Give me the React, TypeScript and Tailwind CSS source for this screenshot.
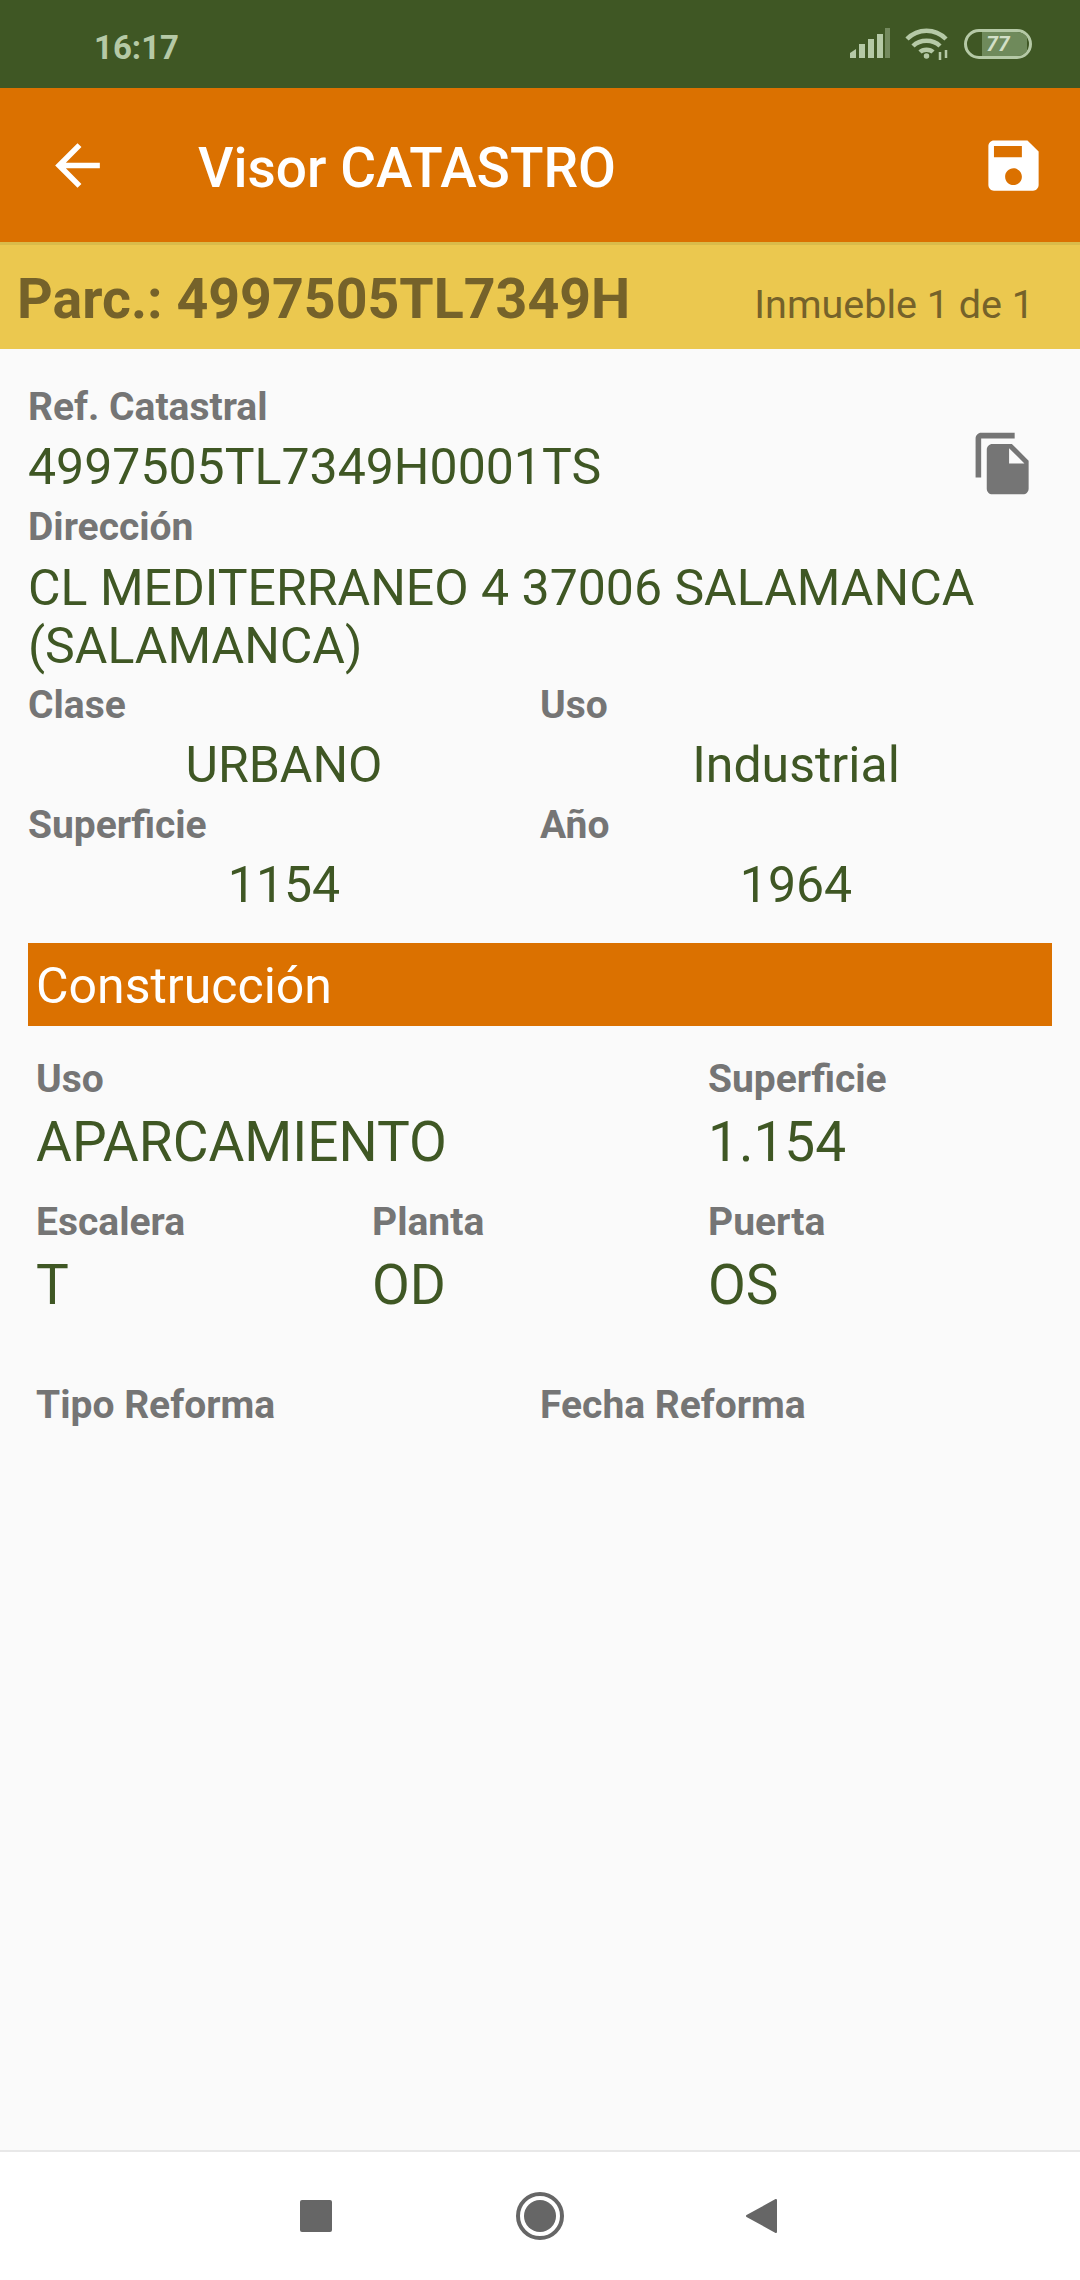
import React from 'react';

const Label = ({ children, className = '' }: { children: React.ReactNode; className?: string }) => (
  <p className={`h-[60px] text-[39px] leading-[60px] font-bold text-[#757575] ${className}`}>{children}</p>
);

const Value = ({ children, className = 'leading-[60px]' }: { children: React.ReactNode; className?: string }) => (
  <p className={`text-[50px] text-[#3f5724] ${className}`}>{children}</p>
);

const BigValue = ({ children }: { children: React.ReactNode }) => (
  <p className="h-[64px] pt-[1px] text-[55px] leading-[64px] text-[#3f5724]">{children}</p>
);

const StatusIcons = () => (
  <div className="flex items-center">
    <svg width="42" height="32" viewBox="0 0 42 32" fill="#b5c9a6">
      <path d="M1 25l6-4v9H1z" />
      <rect x="10" y="16" width="6" height="14" />
      <rect x="19" y="11" width="6" height="19" />
      <rect x="28" y="6" width="6" height="24" />
      <rect x="36" y="0" width="5" height="30" opacity="0.45" />
    </svg>
    <svg className="ml-[14px]" width="46" height="32" viewBox="0 0 46 32" fill="none" stroke="#b5c9a6" strokeWidth="4.5">
      <path d="M2 11c11-11 28-11 39 0" />
      <path d="M8 18c7-7 20-7 27 0" />
      <path d="M15 24c3-3 10-3 13 0" />
      <circle cx="21.5" cy="28" r="2" fill="#b5c9a6" strokeWidth="1.5" />
      <path d="M35 24v8M41 22v8" strokeWidth="2.5" />
    </svg>
    <div className="relative ml-[13px] h-[30px] w-[68px] overflow-hidden rounded-full border-[3px] border-[#b5c9a6]">
      <div className="ml-[15px] h-full w-[45px] bg-[#6f8a5b]" />
      <span className="absolute inset-0 flex items-center justify-center text-[21px] leading-none font-bold italic text-[#d2dfc6]">77</span>
    </div>
  </div>
);

export default function App() {
  return (
    <div className="flex h-[2280px] w-[1080px] flex-col bg-[#fafafa] font-['Roboto',sans-serif]">
      <div className="flex h-[88px] items-center justify-between bg-[#3f5724] pr-[48px] pl-[94px]">
        <span className="mt-[8px] text-[33px] font-bold text-[#b5c9a6]">16:17</span>
        <StatusIcons />
      </div>

      <div className="flex h-[154px] items-center justify-between bg-[#db7100] pr-[33px] pl-[44px]">
        <div className="flex items-center">
          <svg width="67" height="67" viewBox="0 0 24 24" fill="#ffffff">
            <path d="M20 11H7.83l5.59-5.59L12 4l-8 8 8 8 1.41-1.41L7.83 13H20v-2z" />
          </svg>
          <h1 className="mt-[6px] ml-[87px] text-[55px] font-medium text-white">Visor CATASTRO</h1>
        </div>
        <svg width="67" height="67" viewBox="0 0 24 24" fill="#ffffff">
          <path d="M17 3H5c-1.11 0-2 .9-2 2v14c0 1.1.89 2 2 2h14c1.1 0 2-.9 2-2V7l-4-4zm-5 16c-1.66 0-3-1.34-3-3s1.34-3 3-3 3 1.34 3 3-1.34 3-3 3zm3-10H5V5h10v4z" />
        </svg>
      </div>

      <div className="flex h-[107px] items-center justify-between border-t-[3px] border-[#d9bb4a] bg-[#ebc84f] pr-[46px] pl-[17px]">
        <span className="mt-[6px] text-[55.5px] font-bold text-[#75622a]">Parc.: 4997505TL7349H</span>
        <span className="mt-[16px] text-[39.5px] text-[#75622a]">Inmueble 1 de 1</span>
      </div>

      <div className="flex-1 px-[28px] pt-[28px]">
        <Label>Ref. Catastral</Label>
        <div className="flex items-start justify-between pr-[15px]">
          <Value>4997505TL7349H0001TS</Value>
          <svg className="mt-[-7px]" width="67" height="67" viewBox="0 0 24 24" fill="#757575">
            <path d="M16 1H4c-1.1 0-2 .9-2 2v14h2V3h12V1zm-1 4l6 6v10c0 1.1-.9 2-2 2H7.99C6.89 23 6 22.1 6 21l.01-14c0-1.1.89-2 1.99-2h7zm-1 7h5.5L14 6.5V12z" />
          </svg>
        </div>
        <Label>Dirección</Label>
        <Value className="mt-[2px] leading-[58px]">CL MEDITERRANEO 4 37006 SALAMANCA (SALAMANCA)</Value>

        <div className="grid grid-cols-2">
          <div>
            <Label>Clase</Label>
            <Value className="text-center leading-[60px]">URBANO</Value>
          </div>
          <div>
            <Label>Uso</Label>
            <Value className="text-center leading-[60px]">Industrial</Value>
          </div>
          <div>
            <Label>Superficie</Label>
            <Value className="text-center leading-[60px]">1154</Value>
          </div>
          <div>
            <Label>Año</Label>
            <Value className="text-center leading-[60px]">1964</Value>
          </div>
        </div>

        <div className="mt-[28px] flex h-[83px] items-center bg-[#db7100] px-[8px] pt-[4px] text-[50px] text-white">Construcción</div>

        <div className="px-[8px] pt-[23px]">
          <div className="grid grid-cols-3">
            <div className="col-span-2">
              <Label>Uso</Label>
              <BigValue>APARCAMIENTO</BigValue>
            </div>
            <div>
              <Label>Superficie</Label>
              <BigValue>1.154</BigValue>
            </div>
            <div className="mt-[19px]">
              <Label>Escalera</Label>
              <BigValue>T</BigValue>
            </div>
            <div className="mt-[19px]">
              <Label>Planta</Label>
              <BigValue>OD</BigValue>
            </div>
            <div className="mt-[19px]">
              <Label>Puerta</Label>
              <BigValue>OS</BigValue>
            </div>
          </div>
          <div className="mt-[59px] flex">
            <Label className="w-[504px]">Tipo Reforma</Label>
            <Label>Fecha Reforma</Label>
          </div>
        </div>
      </div>

      <div className="flex h-[130px] items-center border-t-2 border-[#e8e8e8] bg-white pl-[300px]">
        <div className="h-[32px] w-[32px] rounded-[2px] bg-[#666666]" />
        <div className="ml-[184px] flex h-[48px] w-[48px] items-center justify-center rounded-full border-[4px] border-[#666666]">
          <div className="h-[32px] w-[32px] rounded-full bg-[#666666]" />
        </div>
        <svg className="ml-[181px]" width="32" height="36" viewBox="0 0 32 36" fill="#666666" stroke="#666666" strokeWidth="2" strokeLinejoin="round">
          <path d="M2 18L31 2v32z" />
        </svg>
      </div>
    </div>
  );
}
